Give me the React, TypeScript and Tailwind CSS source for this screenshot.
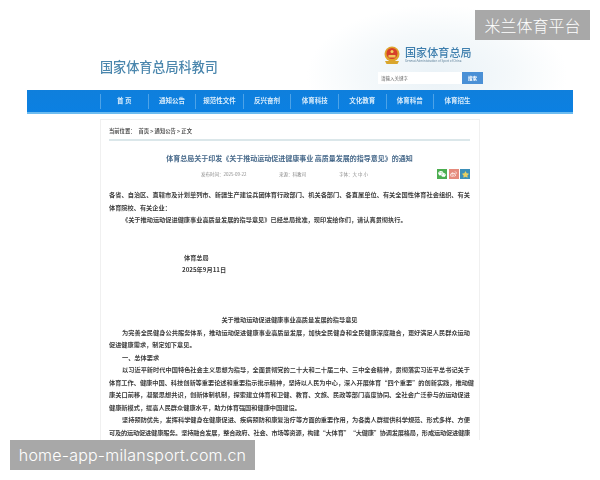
import { FaWeixin, FaWeibo, FaStar } from "react-icons/fa";

const nav = ["首 页", "通知公告", "规范性文件", "反兴奋剂", "体育科技", "文化教育", "体育科普", "体育招生"];

function Line({ children, indent = false, justify = true, tight = false }: { children: string; indent?: boolean; justify?: boolean; tight?: boolean }) {
  return (
    <div
      className={`h-[12.5px] leading-[12.5px] whitespace-nowrap ${indent ? "pl-[13px]" : ""} ${justify ? "[text-align-last:justify]" : ""} ${tight ? "tracking-[-0.18px]" : ""}`}
    >
      {children}
    </div>
  );
}

export default function App() {
  return (
    <div className="relative h-[480px] w-[600px] overflow-hidden bg-white font-['Noto_Sans_CJK_SC','Liberation_Sans',sans-serif]">
      <div className="mx-auto h-[440px] w-[546px] overflow-hidden blur-[0.35px]">
        <header className="flex h-[90px] justify-between bg-[radial-gradient(ellipse_130px_70px_at_410px_75px,#eaf2f7_0%,#f5f9fb_60%,#ffffff_100%)] pl-[73px] pr-[90px]">
          <h1 className="mt-[57px] h-[20px] text-[13.1px] font-medium leading-[20px] text-[#4a86ad]">国家体育总局科教司</h1>
          <div className="mt-[46px] flex w-[105px] flex-col">
            <div className="flex h-[18px] items-start pl-[6px]">
              <svg viewBox="0 0 16 18" className="h-[18px] w-[16px]">
                <path d="M1 15h14l-1.500 3h-11z" fill="#d9a62e" />
                <circle cx="8" cy="8" r="7.500" fill="#dfa32c" />
                <circle cx="8" cy="7.500" r="5.500" fill="#d6402a" />
                <rect x="4.500" y="9" width="7" height="2.500" fill="#efc65a" />
                <circle cx="8" cy="5.500" r="1.500" fill="#f3d264" />
              </svg>
              <div className="ml-[5px] flex flex-col">
                <span className="text-[11px] font-medium leading-[13px] tracking-[0.1px] text-[#3f7fae]">国家体育总局</span>
                <span className="whitespace-nowrap text-[3px] leading-[4px] text-[#5c7f99]">General Administration of Sport of China</span>
              </div>
            </div>
            <div className="mt-[8px] flex h-[12px]">
              <div className="flex-1 bg-white pl-[3px] text-[4.500px] leading-[12px] text-[#666]">请输入关键字</div>
              <button className="w-[21px] bg-[#4a90d6] text-[4.500px] font-bold text-white">搜索</button>
            </div>
          </div>
        </header>

        <nav className="flex h-[24px] border-b-2 border-[#6dbcf0] bg-[linear-gradient(#0f7fdc,#0b80e2)] pl-[73px]">
          {nav.map((item) => (
            <div
              key={item}
              className="flex h-[15px] w-[47.6px] items-center justify-center self-center border-l border-[#4da3e8] text-[6.500px] font-bold text-[#d9ecfb]"
            >
              {item}
            </div>
          ))}
        </nav>

        <main className="ml-[73px] mt-[5px] h-[321px] w-[380px] border border-b-0 border-[#f0f0f0] pl-[8px] pr-[9px] pt-[7px] text-[6.200px] font-bold text-[#444]">
          <div className="flex h-[14px] items-center gap-[3px] border-b-2 border-[#dbe7ea] pb-[3px] text-[5.300px] text-[#555]">
            <span>当前位置：</span>
            <span>首页 &gt; 通知公告 &gt; 正文</span>
          </div>

          <h2 className="mt-[11px] h-[12px] whitespace-nowrap text-center text-[7px] font-bold leading-[12px] text-[#47698a]">
            体育总局关于印发《关于推动运动促进健康事业 高质量发展的指导意见》的通知
          </h2>

          <div className="mt-[5px] flex h-[10px] items-center pl-[92px] text-[4.500px] font-normal text-[#8b8b8b]">
            <span className="w-[78px]">发布时间：2025-09-22</span>
            <span className="w-[60px]">来源：科教司</span>
            <span>字体：大 中 小</span>
            <div className="ml-auto flex gap-[1.500px]">
              <span className="flex h-[10px] w-[10px] items-center justify-center bg-[#4cae50] text-[8px] text-white">
                <FaWeixin />
              </span>
              <span className="flex h-[10px] w-[10px] items-center justify-center bg-[#e58a7c] text-[7px] text-[#fbe3de]">
                <FaWeibo />
              </span>
              <span className="flex h-[10px] w-[10px] items-center justify-center bg-[#3d8fb8] text-[7px] text-[#e8cf63]">
                <FaStar />
              </span>
            </div>
          </div>

          <div className="mt-[10px] text-[#3d3d3d]">
            <Line>各省、自治区、直辖市及计划单列市、新疆生产建设兵团体育行政部门、机关各部门、各直属单位、有关全国性体育社会组织、有关</Line>
            <Line justify={false}>体育院校、有关企业：</Line>
            <Line indent justify={false}>《关于推动运动促进健康事业高质量发展的指导意见》已经总局批准，现印发给你们，请认真贯彻执行。</Line>
            <div className="h-[25px]" />
            <div className="h-[12.500px] pl-[75px] leading-[12.500px]">体育总局</div>
            <div className="h-[12.500px] pl-[73px] leading-[12.500px]">2025年9月11日</div>
            <div className="h-[37.500px]" />
            <div className="h-[12.500px] text-center leading-[12.500px]">关于推动运动促进健康事业高质量发展的指导意见</div>
            <Line indent>为完善全民健身公共服务体系，推动运动促进健康事业高质量发展，加快全民健身和全民健康深度融合，更好满足人民群众运动</Line>
            <Line justify={false}>促进健康需求，制定如下意见。</Line>
            <Line indent justify={false}>一、总体要求</Line>
            <Line indent>以习近平新时代中国特色社会主义思想为指导，全面贯彻党的二十大和二十届二中、三中全会精神，贯彻落实习近平总书记关于</Line>
            <Line>体育工作、健康中国、科技创新等重要论述和重要指示批示精神，坚持以人民为中心，深入开展体育“四个重要”的创新实践，推动健</Line>
            <Line>康关口前移，凝聚思想共识，创新体制机制，探索建立体育和卫健、教育、文旅、民政等部门高度协同、全社会广泛参与的运动促进</Line>
            <Line justify={false}>健康新模式，提高人民群众健康水平，助力体育强国和健康中国建设。</Line>
            <Line indent>坚持预防优先，发挥科学健身在健康促进、疾病预防和康复治疗等方面的重要作用，为各类人群提供科学规范、形式多样、方便</Line>
            <Line tight>可及的运动促进健康服务。坚持融合发展，整合政府、社会、市场等资源，构建“大体育”“大健康”协调发展格局，形成运动促进健康</Line>
          </div>
        </main>
      </div>

      <div className="absolute right-[10px] top-[10px] flex h-[30px] w-[115px] items-center justify-center bg-[#a8a8a8] text-[16px] font-light text-white">
        米兰体育平台
      </div>
      <div className="absolute bottom-[10px] left-[10px] flex h-[30px] w-[245px] items-center justify-center bg-[#a8a8a8] font-['Inter',sans-serif] text-[16px] font-light tracking-[0.2px] text-white">
        home-app-milansport.com.cn
      </div>
    </div>
  );
}
